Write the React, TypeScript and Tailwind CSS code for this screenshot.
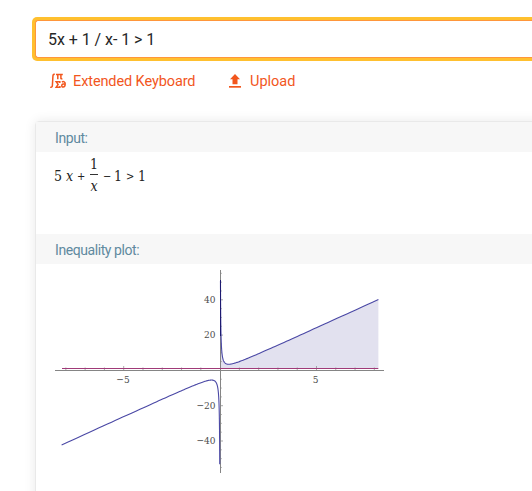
import * as React from "react";

// Plot area is drawn in its own 352x227 box
const ORIGIN = { x: 184.1, y: 106.4 };
const UNIT = { x: 19.28, y: 1.765 };

const px = (x: number) => ORIGIN.x + x * UNIT.x;
const py = (y: number) => ORIGIN.y - y * UNIT.y;
const f = (x: number) => 5 * x + 1 / x - 1;

function curve(from: number, to: number) {
  const points: string[] = [];
  const steps = 160;
  for (let i = 0; i <= steps; i++) {
    const x = from * Math.pow(to / from, i / steps);
    points.push(`${px(x).toFixed(2)},${py(f(x)).toFixed(2)}`);
  }
  return points;
}

const right = curve(0.0194, 8.21);
const left = curve(-0.0192, -8.22);
const xTicks = [-8, -7, -6, -5, -4, -3, -2, -1, 1, 2, 3, 4, 5, 6, 7, 8];
const yTicks = [
  -55, -50, -45, -40, -35, -30, -25, -20, -15, -10, -5, 5, 10, 15, 20, 25, 30,
  35, 40, 45, 50, 55,
];

function InequalityPlot() {
  return (
    <svg
      width="352"
      height="227"
      viewBox="0 0 352 227"
      className="block font-['DejaVu_Serif_Condensed','DejaVu_Serif',serif] text-[10px]"
    >
      <polygon
        points={`${right.join(" ")} ${px(8.21)},${py(1)} ${px(0.02)},${py(1)}`}
        fill="#e2e1ef"
      />
      <g stroke="#858585" strokeWidth="1">
        <path d="M19 106.5H348M184.5 6V209" />
        {xTicks.map((t) => (
          <path key={t} d={`M${px(t)} 106V${t % 5 === 0 ? 102 : 103.5}`} strokeWidth="0.7" />
        ))}
        {yTicks.map((t) => (
          <path key={t} d={`M184 ${py(t)}H${t % 20 === 0 ? 187 : 185.8}`} strokeWidth="0.7" />
        ))}
      </g>
      <path d="M26 104.5H342.3" stroke="#a03a78" strokeWidth="1.2" />
      <g fill="none" stroke="#4a48a5" strokeWidth="1.1">
        <polyline points={right.join(" ")} />
        <polyline points={left.join(" ")} />
      </g>
      <path d="M184.5 16V72" stroke="#1d1a70" strokeWidth="1" />
      <g fill="#4c4c4c">
        <text x="179.5" y="39" textAnchor="end">40</text>
        <text x="179.5" y="74" textAnchor="end">20</text>
        <text x="179.5" y="145" textAnchor="end">−20</text>
        <text x="179.5" y="180" textAnchor="end">−40</text>
        <text x="87" y="119" textAnchor="middle">−5</text>
        <text x="279.7" y="119" textAnchor="middle">5</text>
      </g>
    </svg>
  );
}

function Formula() {
  return (
    <div className="flex h-[38px] items-center font-['DejaVu_Serif_Condensed','DejaVu_Serif',serif] text-[14px] leading-none text-[#222]">
      <span className="w-[12px]">5</span>
      <i className="w-[11px]">x</i>
      <span className="w-[13px] text-[11px]">+</span>
      <span className="flex w-2 flex-col items-center">
        <span className="h-[17px]">1</span>
        <span className="h-px w-2 bg-[#333]" />
        <i className="mt-[4px] h-[16px]">x</i>
      </span>
      <span className="ml-[5px] w-[11px] text-[11px]">−</span>
      <span className="w-[12px]">1</span>
      <span className="w-[12px] text-[11px]">&gt;</span>
      <span>1</span>
    </div>
  );
}

function KeyboardIcon() {
  return (
    <svg width="16" height="16" viewBox="0 0 16 16" fill="none" stroke="#f2561d" strokeWidth="1.5" className="-mt-0.5">
      <path d="M4.8 1.5C3.2.9 3 2 2.9 3.5L2.4 12.2C2.3 14 1.6 14.6.2 14.1" />
      <path d="M6 1.4H12.8M7.8 1.4V6.2M10.9 1.4V5.4Q11 6.1 12.4 5.7" />
      <path d="M9.8 10V8.8H6.2L8.1 11.4L6.2 14.2H9.9V13" />
      <path d="M11.9 9C13.6 8 15.2 8.9 15.2 10.8C15.2 12.9 14.5 14.1 13.2 14.1C12 14.1 11.6 13.2 11.8 12.2C12.1 10.9 14 10.7 15.1 11.4" />
    </svg>
  );
}

function UploadIcon() {
  return (
    <svg width="12" height="14" viewBox="0 0 12 14" fill="#f2561d" className="-mt-0.5">
      <path d="M6 0L11 5.2H8.5V10.3H3.5V5.2H1Z" />
      <path d="M0 12H12V13.7H0Z" />
    </svg>
  );
}

function PodHeader({ children }: { children: React.ReactNode }) {
  return (
    <h2 className="flex h-[30px] items-center bg-[#f7f7f7] pl-[19px] pt-0.5 text-[14px] tracking-[-0.42px] text-[#5f8a9f]">
      {children}
    </h2>
  );
}

export default function App() {
  return (
    <div className="h-[491px] w-full overflow-hidden bg-white pt-[17px] font-[Roboto,sans-serif]">
      <div className="ml-8 h-11 rounded-l-[5px] bg-[#ffc02f] py-[3px] pl-[3px]">
        <div className="flex h-full items-center rounded-l-[3px] border border-r-0 border-[#ff963b] bg-white pl-3 pt-0.5 text-[16px] tracking-[-0.05px] text-[#272727]">
          5x + 1 / x- 1 &gt; 1
        </div>
      </div>
      <nav className="flex h-10 items-center pl-[50px] pt-px text-[14.5px] text-[#f2561d]">
        <a className="flex items-center">
          <KeyboardIcon />
          <span className="ml-[7px] w-[156px] pt-px tracking-[-0.1px]">Extended Keyboard</span>
        </a>
        <a className="flex items-center">
          <UploadIcon />
          <span className="ml-[9px] pt-px">Upload</span>
        </a>
      </nav>
      <main className="-mr-5 ml-[35px] mt-[20px] h-[400px] rounded-tl-[4px] border border-[#e9e9e9] bg-white shadow-[0_0_12px_rgba(0,0,0,0.09)]">
        <section className="h-[112px]">
          <PodHeader>Input:</PodHeader>
          <div className="pl-[18px] pt-[5px]">
            <Formula />
          </div>
        </section>
        <section>
          <PodHeader>Inequality plot:</PodHeader>
          <InequalityPlot />
        </section>
      </main>
    </div>
  );
}
